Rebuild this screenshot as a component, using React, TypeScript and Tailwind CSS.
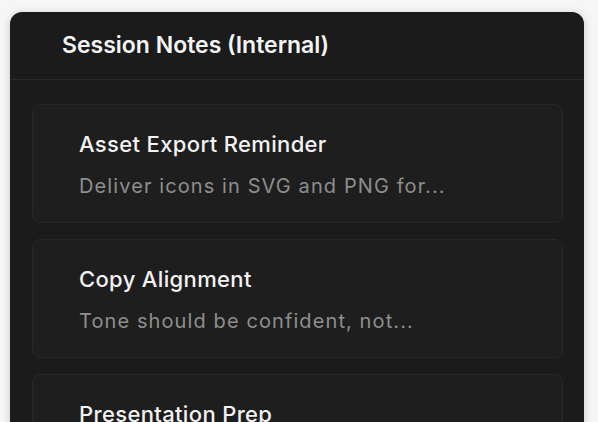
import React from 'react';

const notes = [
  { title: 'Asset Export Reminder', body: 'Deliver icons in SVG and PNG for...' },
  { title: 'Copy Alignment', body: 'Tone should be confident, not...' },
  { title: 'Presentation Prep', body: 'Walk through the final flow before...' },
];

const NoteCard = ({ title, body }: { title: string; body: string }) => (
  <div className="rounded-lg border border-[#282828] bg-[#1e1e1e] pl-[46px] pr-6 pt-[25px] pb-[23px]">
    <div className="text-[22px] leading-[28px] font-medium tracking-[0.35px] text-[#f2f2f2] truncate">{title}</div>
    <div className="mt-[15px] text-[20px] leading-[26px] tracking-[1.1px] text-[#8e8e8e] truncate">{body}</div>
  </div>
);

export default function App() {
  return (
    <div
      className="h-[422px] overflow-hidden bg-[#f6f6f6] pl-[10px] pr-[14px] pt-3"
      style={{ fontFamily: 'Inter, "Noto Sans", sans-serif' }}
    >
      <div className="h-[440px] rounded-xl bg-[#1b1b1b] shadow-[0_2px_10px_rgba(0,0,0,0.18)]">
        <div className="h-[68px] flex items-center pl-[52px] pb-[2px] border-b border-[#2a2a2a]">
          <h2 className="text-[23px] leading-7 font-semibold text-[#f4f4f4]">Session Notes (Internal)</h2>
        </div>
        <div className="flex flex-col gap-4 pt-6 pl-[22px] pr-[21px]">
          {notes.map((n) => (
            <NoteCard key={n.title} title={n.title} body={n.body} />
          ))}
        </div>
      </div>
    </div>
  );
}
